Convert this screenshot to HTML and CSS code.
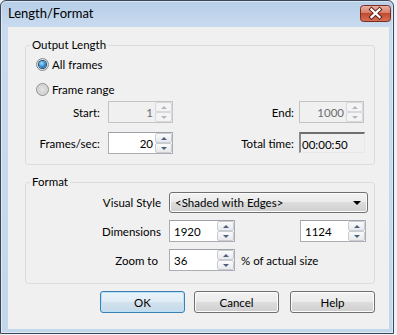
FILE: index.html
```html
<!DOCTYPE html>
<html lang="en">
<head>
    <meta charset="UTF-8">
    <title>Length/Format</title>
    <link rel="stylesheet" href="styles.css">
</head>
<body>
    <div class="window">
        <div class="titlebar">
            <span class="title">Length/Format</span>
            <button class="close" type="button">
                <svg width="31" height="17" viewBox="0 0 31 17">
                    <defs>
                        <linearGradient id="red" x1="0" y1="0" x2="0" y2="1">
                            <stop offset="0" stop-color="#eab3a6"/>
                            <stop offset="0.45" stop-color="#d7806b"/>
                            <stop offset="0.5" stop-color="#c24a30"/>
                            <stop offset="1" stop-color="#d9725a"/>
                        </linearGradient>
                    </defs>
                    <rect x="0.5" y="0.5" width="30" height="16" rx="3" fill="url(#red)" stroke="#7a2e22"/>
                    <path d="M11.5 4.5 L19.5 12 M19.5 4.5 L11.5 12" stroke="#5a2018" stroke-width="4.2" stroke-linecap="square"/>
                    <path d="M11.5 4.5 L19.5 12 M19.5 4.5 L11.5 12" stroke="#ffffff" stroke-width="2.3" stroke-linecap="square"/>
                </svg>
            </button>
        </div>

        <div class="client">
            <fieldset class="group output">
                <legend>Output Length</legend>
                <label class="radio"><span class="dot checked"></span>All frames</label>
                <label class="radio second"><span class="dot"></span>Frame range</label>

                <div class="fields">
                    <span class="lbl">Start:</span>
                    <div class="spin off">
                        <input class="num" value="1" disabled>
                        <span class="arrows"><span class="up"></span><span class="down"></span></span>
                    </div>
                    <span class="lbl end">End:</span>
                    <div class="spin off">
                        <input class="num" value="1000" disabled>
                        <span class="arrows"><span class="up"></span><span class="down"></span></span>
                    </div>

                    <span class="lbl">Frames/sec:</span>
                    <div class="spin">
                        <input class="num" value="20">
                        <span class="arrows"><span class="up"></span><span class="down"></span></span>
                    </div>
                    <span class="lbl end">Total time:</span>
                    <div class="readout">00:00:50</div>
                </div>
            </fieldset>

            <fieldset class="group format">
                <legend>Format</legend>
                <div class="formgrid">
                    <span class="lbl">Visual Style</span>
                    <div class="combo"><span>&lt;Shaded with Edges&gt;</span><span class="caret"></span></div>

                    <span class="lbl">Dimensions</span>
                    <div class="dims">
                        <div class="spin">
                            <input class="num left" value="1920">
                            <span class="arrows"><span class="up"></span><span class="down"></span></span>
                        </div>
                        <div class="spin">
                            <input class="num left" value="1124">
                            <span class="arrows"><span class="up"></span><span class="down"></span></span>
                        </div>
                    </div>

                    <span class="lbl zoom">Zoom to</span>
                    <div class="zoomrow">
                        <div class="spin">
                            <input class="num left" value="36">
                            <span class="arrows"><span class="up"></span><span class="down"></span></span>
                        </div>
                        <span>% of actual size</span>
                    </div>
                </div>
            </fieldset>

            <div class="buttons">
                <button class="btn default" type="button">OK</button>
                <button class="btn cancel" type="button">Cancel</button>
                <button class="btn" type="button">Help</button>
            </div>
        </div>
    </div>
</body>
</html>
```

FILE: styles.css
```css
body {
    margin: 0;
    background: #eef1f5;
    font-family: Lato, "Segoe UI", sans-serif;
    font-size: 11.5px;
    color: #000;
}
.window {
    width: 394px;
    height: 334px;
    box-sizing: border-box;
    border: 1px solid #3b4756;
    border-radius: 6px 6px 0 0;
    background: linear-gradient(#b6cee8 0, #c9dbef 26px, #c3d7ec 100%);
    box-shadow: inset 0 0 0 1px rgba(255, 255, 255, 0.45);
    display: flex;
    flex-direction: column;
}
.titlebar {
    height: 26px;
    flex: none;
    display: flex;
    align-items: flex-start;
    padding: 0 2px 0 7px;
}
.title {
    font-size: 13px;
    line-height: 16px;
    padding-top: 4px;
}
.close {
    margin-left: auto;
    margin-top: 4px;
    width: 31px;
    height: 17px;
    padding: 0;
    border: 0;
    background: none;
}
.close svg {
    display: block;
}
.client {
    flex: 1;
    margin: 0 4px 4px 7px;
    background: #f0f0f0;
    padding: 10px 14px 0 17px;
}
.group {
    margin: 0;
    padding: 3px 0 10px;
    border: 1px solid #d8dde2;
    border-radius: 3px;
    min-width: 0;
}
.group legend {
    padding: 0 2px;
    margin-left: 4px;
    line-height: 16px;
}
.format {
    margin-top: 9px;
    padding: 2px 0 12px;
}
.radio {
    display: flex;
    align-items: center;
    height: 16px;
    margin-left: 10px;
    gap: 3px;
}
.radio.second {
    margin-top: 9px;
}
.dot {
    width: 13px;
    height: 13px;
    box-sizing: border-box;
    border-radius: 50%;
    border: 1px solid #8a8c8e;
    background: radial-gradient(circle at 50% 50%, #e6e6e6 0, #d2d2d2 55%, #f6f6f6 100%);
    display: flex;
    align-items: center;
    justify-content: center;
}
.dot.checked::after {
    content: "";
    width: 7px;
    height: 7px;
    border-radius: 50%;
    background: radial-gradient(circle at 40% 35%, #a8e1fb 0, #3a8fd1 50%, #164c86 100%);
    box-shadow: 0 0 0 1px #1d4f7e;
}
.fields {
    display: grid;
    grid-template-columns: 82px 65px 1fr 66px;
    row-gap: 9px;
    align-items: center;
    margin-top: 4px;
    padding-right: 9px;
}
.lbl {
    text-align: right;
    padding-right: 8px;
}
.lbl.end {
    padding-right: 5px;
}
.lbl.zoom {
    padding-right: 11px;
}
.spin {
    display: flex;
    width: 65px;
    height: 22px;
    box-sizing: border-box;
    border: 1px solid #abadb3;
    border-top-color: #9ea1a8;
    background: #fff;
}
.spin.off {
    border-color: #c2c4c8;
    background: #f0f0f0;
}
.num {
    flex: 1;
    min-width: 0;
    border: 0;
    padding: 0 2px 0 0;
    margin: 0;
    font: inherit;
    color: #000;
    background: transparent;
    text-align: right;
    outline: none;
}
.num.left {
    text-align: left;
    padding: 0 0 0 4px;
}
.spin.off .num {
    color: #6d6d6d;
}
.arrows {
    width: 17px;
    display: flex;
    flex-direction: column;
}
.arrows span {
    flex: 1;
    border: 1px solid #c9cdd3;
    border-radius: 2px;
    background: linear-gradient(#fbfbfb, #e7e9ec);
    display: flex;
    align-items: center;
    justify-content: center;
}
.arrows .up::before,
.arrows .down::before {
    content: "";
    border-left: 3px solid transparent;
    border-right: 3px solid transparent;
}
.arrows .up::before {
    border-bottom: 3px solid #4d5f80;
}
.arrows .down::before {
    border-top: 3px solid #4d5f80;
}
.spin.off .arrows span {
    border-color: #d6d8db;
    background: #f4f4f4;
}
.spin.off .arrows .up::before {
    border-bottom-color: #b3b8c0;
}
.spin.off .arrows .down::before {
    border-top-color: #b3b8c0;
}
.readout {
    height: 21px;
    box-sizing: border-box;
    border-top: 2px solid #6e6e6e;
    border-left: 2px solid #8a8a8a;
    border-right: 1px solid #e8e8e8;
    border-bottom: 1px solid #e8e8e8;
    padding: 4px 0 0 1px;
    line-height: 14px;
    margin-bottom: 1px;
}
.formgrid {
    display: grid;
    grid-template-columns: 143px 1fr;
    row-gap: 7px;
    align-items: center;
}
.combo {
    width: 199px;
    height: 21px;
    box-sizing: border-box;
    border: 1px solid #707070;
    border-radius: 3px;
    background: linear-gradient(#f2f2f2 0, #ebebeb 49%, #dddddd 50%, #cfcfcf 100%);
    box-shadow: inset 0 0 0 1px #fcfcfc;
    display: flex;
    align-items: center;
    padding: 0 6px 0 5px;
}
.caret {
    margin-left: auto;
    border-left: 4px solid transparent;
    border-right: 4px solid transparent;
    border-top: 4px solid #000;
}
.dims {
    display: flex;
    justify-content: space-between;
    width: 197px;
}
.dims .spin {
    width: 66px;
}
.zoomrow {
    display: flex;
    align-items: center;
    gap: 6px;
}
.zoomrow .spin {
    width: 66px;
}
.buttons {
    display: flex;
    margin-top: 7px;
    padding-left: 75px;
}
.btn {
    width: 85px;
    height: 22px;
    padding: 0;
    border: 1px solid #707070;
    border-radius: 3px;
    background: linear-gradient(#f2f2f2 0, #ebebeb 49%, #dddddd 50%, #cfcfcf 100%);
    box-shadow: inset 0 0 0 1px #fcfcfc;
    font: inherit;
    color: #000;
}
.btn.default {
    border-color: #3c7fb1;
    background: linear-gradient(#eaf3fa 0, #e0ecf5 49%, #d2e2ee 50%, #c5d9e8 100%);
    box-shadow: inset 0 0 0 1px #b9e1f8;
}
.btn.cancel {
    margin: 0 11px 0 9px;
}
```
